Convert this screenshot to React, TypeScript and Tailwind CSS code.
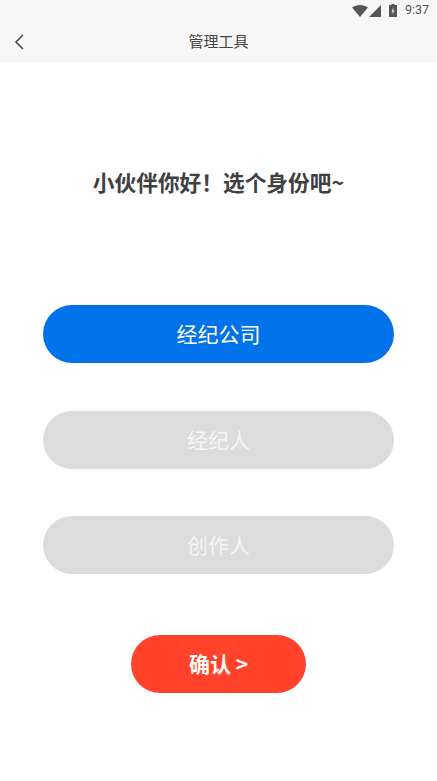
function StatusBar() {
  return (
    <div className="flex h-[21px] items-center justify-end bg-[#f7f7f7] pr-[8px] text-[#555555]">
      <svg width="16" height="12" viewBox="0 0 16 12" className="mr-[1px]">
        <path d="M0 2.500C2.200 .9 5 0 8 0s5.800 .9 8 2.500L8 12z" fill="#555555" />
      </svg>
      <svg width="12" height="12" viewBox="0 0 12 12" className="mr-[8px]">
        <path d="M12 0v12H0z" fill="#555555" />
      </svg>
      <svg width="8" height="13" viewBox="0 0 8 13" className="mr-[8px]">
        <path d="M2.500 0h3v1H8v12H0V1h2.500z" fill="#555555" />
        <path d="M4.500 3.500L2.500 7.500h1.300L3.300 10.500l2.200-4H4.200z" fill="#f7f7f7" />
      </svg>
      <span className="font-['Roboto',sans-serif] text-[12.500px] leading-none">9:37</span>
    </div>
  );
}

function NavBar() {
  return (
    <div className="relative flex h-[41px] items-center justify-center bg-[#f7f7f7]">
      <svg width="10" height="16" viewBox="0 0 10 16" fill="none" className="absolute left-[14px] top-[13px]">
        <path d="M9 1L2 8l7 7" stroke="#444444" strokeWidth="1.500" />
      </svg>
      <span className="pb-[1px] font-['Noto_Sans_CJK_SC',sans-serif] text-[15px] text-[#444444]">管理工具</span>
    </div>
  );
}

function RoleButton({ label, active }: { label: string; active?: boolean }) {
  return (
    <button
      className={
        active
          ? "h-[58px] w-full rounded-full bg-[#0073ea] pb-[2px] text-[21px] leading-[56px] text-white"
          : "h-[58px] w-full rounded-full bg-[#dcdcdc] pb-[2px] text-[21px] leading-[56px] text-[#f5f5f5]"
      }
    >
      {label}
    </button>
  );
}

export default function App() {
  return (
    <div className="min-h-[781px] w-[437px] overflow-hidden bg-white font-['Noto_Sans_CJK_SC',sans-serif]">
      <StatusBar />
      <NavBar />
      <h1 className="mt-[104px] text-center text-[21.700px] leading-[32px] font-bold text-[#404040]">
        小伙伴你好！选个身份吧~
      </h1>
      <div className="mt-[107px] flex flex-col gap-[47.500px] px-[43px]">
        <RoleButton label="经纪公司" active />
        <RoleButton label="经纪人" />
        <RoleButton label="创作人" />
      </div>
      <div className="mt-[61px] flex justify-center">
        <button className="h-[58px] w-[175px] rounded-full bg-[#ff4229] pb-[2px] text-[21px] leading-[56px] font-bold text-white">
          确认 &gt;
        </button>
      </div>
    </div>
  );
}
